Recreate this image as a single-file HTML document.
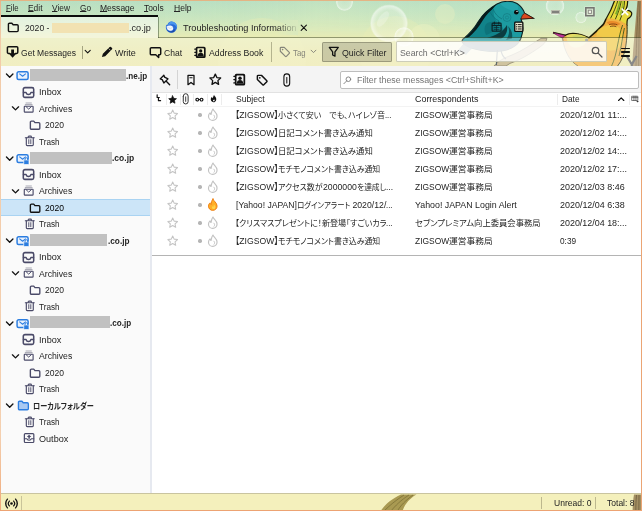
<!DOCTYPE html>
<html lang="ja">
<head>
<meta charset="utf-8">
<title>2020 - Mozilla Thunderbird</title>
<style>
html,body{margin:0;padding:0;}
body{width:642px;height:511px;overflow:hidden;position:relative;background:#fff;
 font-family:"Liberation Sans","Noto Sans CJK JP",sans-serif;font-size:9.6px;color:#242424;}
.abs{position:absolute;}
.t{position:absolute;white-space:pre;line-height:12px;height:12px;font-feature-settings:"palt";}
.r{display:inline-block;transform-origin:0 0;white-space:pre;}
.j{font-size:8.4px;}
svg{position:absolute;overflow:visible;}
#win{position:absolute;left:0;top:0;width:642px;height:511px;overflow:hidden;}
#art{left:0;top:0;}
#menubar{position:absolute;left:0;top:0;width:642px;height:16px;}
#tabs{position:absolute;left:0;top:15px;width:642px;height:23px;}
#toolbar{position:absolute;left:0;top:38px;width:642px;height:28px;}
#folderpane{position:absolute;left:1px;top:66px;width:149px;height:427px;background:#fafafa;}
#splitter{position:absolute;left:150px;top:66px;width:2px;height:427px;background:#e6e9f0;}
#qfbar{position:absolute;left:152px;top:66px;width:489px;height:27px;background:#f4f4f4;border-bottom:1px solid #e2e2e2;box-sizing:border-box;}
#threadpane{position:absolute;left:152px;top:93px;width:489px;height:162px;background:#fff;}
#msgpane{position:absolute;left:152px;top:255px;width:489px;height:238px;background:#fff;border-top:1px solid #b4b4b4;box-sizing:border-box;}
#statusbar{position:absolute;left:0;top:493px;width:642px;height:18px;background:#f4f0bc;border-top:1px solid #c9c4a0;box-sizing:border-box;}
#frame{position:absolute;left:0;top:0;width:642px;height:511px;pointer-events:none;}
#frame i{position:absolute;display:block;}
#frame .l{left:0;top:0;width:1px;height:511px;background:linear-gradient(to bottom,#e9b48a 0,#f2cba9 8%,#f4d0b0 85%,#efa878 100%);}
#frame .r{right:0;top:0;width:1px;height:511px;background:#eba574;}
#frame .tp{left:0;top:0;width:642px;height:1px;background:#e4b484;}
#frame .b{left:0;bottom:0;width:642px;height:1px;background:#eda373;}
.sel{position:absolute;left:0;width:149px;height:17px;background:#cce8ff;}
u{text-decoration-thickness:0.8px;text-underline-offset:0.4px;}
</style>
</head>
<body>
<div id="win">

<svg id="art" class="abs" width="642" height="66" viewBox="0 0 642 66">
<defs>
<linearGradient id="gh" x1="0" x2="0" y1="0" y2="1">
<stop offset="0" stop-color="#b9e0c4"/><stop offset="0.24" stop-color="#c9e6c1"/><stop offset="0.45" stop-color="#dcebbc"/><stop offset="0.575" stop-color="#e8ebb4"/><stop offset="0.8" stop-color="#eae8ab"/><stop offset="1" stop-color="#ebe7a8"/>
</linearGradient>
<linearGradient id="gv" x1="0" x2="1" y1="0" y2="0">
<stop offset="0" stop-color="#a9d6bb" stop-opacity="0.12"/><stop offset="0.3" stop-color="#a9d6bb" stop-opacity="0.06"/><stop offset="0.5" stop-color="#e8efb8" stop-opacity="0.15"/><stop offset="0.7" stop-color="#c4e6cc" stop-opacity="0.1"/><stop offset="1" stop-color="#c4e6cc" stop-opacity="0.2"/>
</linearGradient>
<linearGradient id="gm" x1="0" x2="0" y1="0" y2="1"><stop offset="0" stop-color="#fff"/><stop offset="0.3" stop-color="#fff"/><stop offset="0.55" stop-color="#000"/></linearGradient>
<mask id="topmask"><rect width="642" height="66" fill="url(#gm)"/></mask>
<radialGradient id="bub" cx="0.5" cy="0.5" r="0.5">
<stop offset="0" stop-color="#fff" stop-opacity="0.12"/><stop offset="0.7" stop-color="#fff" stop-opacity="0.2"/><stop offset="0.92" stop-color="#fff" stop-opacity="0.55"/><stop offset="1" stop-color="#fff" stop-opacity="0.1"/>
</radialGradient>
<linearGradient id="fade" x1="0" x2="1"><stop offset="0" stop-color="#d9e8bd" stop-opacity="0"/><stop offset="1" stop-color="#d9e8bd" stop-opacity="1"/></linearGradient>
<clipPath id="bbclip"><path d="M464.5 38 C470 33 474 29 478 22 C483 14 490 8 497 4 C503 0.8 511 0.2 517 3.5 C521 6 523.5 10 524.6 13.2 L533.4 18.2 L521 19 C523 24 524 30 521 38 C519 44 512 49 503 50.6 C492 52.4 476 50.6 468 46.6 C462 43.6 460 40.4 464.5 38Z"/></clipPath>
</defs>
<rect width="642" height="66" fill="url(#gh)"/>
<rect width="642" height="66" fill="url(#gv)" mask="url(#topmask)"/>
<!-- soft bokeh -->
<circle cx="262" cy="62" r="44" fill="#eef0b4" opacity="0.3"/>
<circle cx="395" cy="52" r="36" fill="#eef0b4" opacity="0.25"/>
<circle cx="445" cy="14" r="10" fill="#e6efc0" opacity="0.42"/>
<circle cx="424" cy="40" r="16" fill="#eef2c4" opacity="0.4"/>
<!-- bubbles -->
<circle cx="344.5" cy="2.3" r="8.6" fill="url(#bub)"/>
<circle cx="389" cy="23.4" r="19" fill="url(#bub)"/>
<ellipse cx="383" cy="19" rx="4" ry="9" transform="rotate(35 383 19)" fill="#fff" opacity="0.22"/>
<circle cx="404" cy="37" r="10" fill="url(#bub)"/>
<circle cx="555" cy="6" r="9.5" fill="url(#bub)"/>
<circle cx="581" cy="17.5" r="5.8" fill="url(#bub)"/>
<!-- branch under blue bird -->
<path d="M494 66 C498 61 504 58 512 55 C522 51 532 44 541 38.4 L547 38.4 C546 42 544 44 540 47 C530 54 520 60 510 63.4 L506 66Z" fill="#bba976" stroke="#5f5438" stroke-width="0.8"/>
<!-- blue bird -->
<g id="bluebird">
<path d="M464.5 38 C470 33 474 29 478 22 C483 14 490 8 497 4 C503 0.8 511 0.2 517 3.5 C521 6 523.5 10 524.6 13.2 L533.4 18.2 L521 19 C523 24 524 30 521 38 C519 44 512 49 503 50.6 C492 52.4 476 50.6 468 46.6 C462 43.6 460 40.4 464.5 38Z" fill="#1c9ba0" stroke="#0b2224" stroke-width="1.1"/>
<path d="M465 38 C471 33 475.4 27 479.4 20 C483.4 13.4 489.6 8 496.4 4.2 C491 10.4 486.4 18.6 482.6 26.4 C479.4 32.6 473 37.4 465 38Z" fill="#071a1c"/>
<path d="M459 41.6 L524 41.6 L524 60 L459 60Z" fill="#2f4a58" clip-path="url(#bbclip)"/>
<path d="M468 38 C474 33 479 27 483 20 C486 15 490 11 494 8 C493 14 494 19 498 22 C503 26 506 32 503 38 C495 40 478 40 468 38Z" fill="#11838a"/>
<path d="M486 24 C490 21 495 21 499 24 C497 29 492 33 486 35 C484 31 484 27 486 24Z" fill="#0d6f77" opacity="0.8"/>
<path d="M500 3.4 C506 1.4 513 2 517.4 5 C519 8 518 11 515 12 C510 10 504 8 500 3.4Z" fill="#27aab0" opacity="0.7"/>
<path d="M490 12 C492 16 495 19 499 21 M493 9 C495 14 498 17 502 19" stroke="#0d6f77" stroke-width="0.7" fill="none"/>
<path d="M487 37.6 C495 36 503 32 507 25 C508 31 506 36 501 38.5Z" fill="#0b3c40"/>
<path d="M508 26 C510 31 509 36 506 40 L512 38.5 C513 33 511 29 508 26Z" fill="#0e565c"/>
<circle cx="507" cy="17.5" r="4" fill="none" stroke="#157f86" stroke-width="0.8"/>
<circle cx="507" cy="17.5" r="1.6" fill="none" stroke="#157f86" stroke-width="0.7"/>
<path d="M524.6 13.2 L533.4 18.2 L521 19 C521.5 16.5 522.5 14.5 524.6 13.2Z" fill="#d9481f" stroke="#3a1206" stroke-width="0.7"/>
<circle cx="516.3" cy="12.2" r="2.3" fill="#0a0a0a"/>
<circle cx="517" cy="11.4" r="0.7" fill="#fff"/>
<path d="M497.4 50 C497 55 496.6 60 496.4 65 M501 50.4 C501.6 54 503 57 506 59" stroke="#1a2a2c" stroke-width="1.2" fill="none"/>
<path d="M466 41 C462 45 459 49 456.4 53 L463 52 L466 55 C469 51 472 48 476 46Z" fill="#3a5866" opacity="0.8"/>
</g>
<!-- yellow bird -->
<g id="yellowbird">
<!-- tail feathers -->
<path d="M614.8 0 L627.8 0 C627.8 4 627 7.6 625.6 10.8 C627.8 9.8 630.6 10.6 631.6 12.8 C632.2 15.2 630 17.4 627.6 19 C626.8 21 627 23 627 25 L606 19 C609.6 13 612.6 6.4 614.8 0Z" fill="#e6d83c" stroke="#1d1a06" stroke-width="1.2"/>
<path d="M618 0 C616.4 6 613.6 12.4 610.4 18.6 M621.4 0 C620.4 7 618 13.4 615 20 M624.6 0.6 C624.4 7 622.6 14 619.6 21" stroke="#2c3a0c" stroke-width="0.9" fill="none"/>
<path d="M619.2 0 C618.4 5 616.8 10 615 14 L617 14.8 C618.8 10 620 5 620.6 0Z" fill="#7fae2c"/>
<path d="M622.6 0 C622.2 5 621 10 619.4 15 L621 15.4 C622.8 10.6 623.6 5 623.8 0Z" fill="#9cba2e"/>
<!-- body -->
<path d="M553 32.6 L565 35.4 C568.6 33.4 574 33 579 34.2 C583 35 586.4 37 588.8 38 C594 33.6 599.4 28.6 603.4 24.4 C604.8 21.6 605.6 20.2 606 19 C612 17.6 621 20 627 25 C627.4 31 627 38 625.8 46 C624.8 54 621.6 61 617.6 66 L578 66 C571 62 566 54 563.6 44 C563.2 42 562.8 40 562.6 38.2Z" fill="#f1b244"/>
<path d="M553 32.6 L565 35.4 C568.6 33.4 574 33 579 34.2 C583 35 586.4 37 588.8 38 C594 33.6 599.4 28.6 603.4 24.4 C604.8 21.6 605.6 20.2 606 19" fill="none" stroke="#1d1a06" stroke-width="1.6"/>
<path d="M627 25 C627.4 31 627 38 625.8 46 C624.8 54 621.6 61 617.6 66" fill="none" stroke="#2a2a10" stroke-width="1"/>
<path d="M562.6 38.2 C562.8 40 563.2 42 563.6 44 C566 54 571 62 578 66" fill="none" stroke="#5a5030" stroke-width="0.8"/>
<path d="M566.4 35.4 C570.4 33.8 576 33.6 580.6 34.8 C584 35.6 586.6 37 588.6 38.2 C586.6 44 581 48 574.6 47.4 C569.6 46.6 566.4 41.6 566.4 35.4Z" fill="#e6dc62"/>
<path d="M572 36 C576 34.6 581 35.4 584 37.4 C581 39.6 575.6 39.4 572 36Z" fill="#c9d66a" opacity="0.8"/>
<path d="M598 30 C603 25.6 611 24 617 26.4 C622 28.6 624 35 622.6 43 C620 51 609 53 602 48 C596 44 595 35 598 30Z" fill="#f0d84c" opacity="0.62"/>
<path d="M592 38 C596 35 600 35 603 38 C602 43 597 46 592.6 44 C591 42 591 40 592 38Z" fill="#f6c04a" opacity="0.85"/>
<path d="M606.6 22.4 C611 20 617 21 620.6 24 C616.6 26.4 610.6 26.8 606.6 22.4Z" fill="#e78426" opacity="0.85"/>
<path d="M609 24.6 C612 23.6 615 23.8 617.4 24.8 M610 26.6 C612.4 26 614.6 26 616.4 26.8" stroke="#5a2c08" stroke-width="0.7" fill="none"/>
<path d="M622.6 25 C620.4 31 619 38 617.4 46 C616.4 52 614.4 60 611.6 66 M624.4 28 C622.6 36 621.6 46 619 56" stroke="#3d5a16" stroke-width="0.9" fill="none"/>
<path d="M553 32.6 L565 35.4 L562.6 38.2 C559 36.6 555.6 34.6 553 32.6Z" fill="#c2329a" stroke="#4a0c38" stroke-width="0.5"/>
<circle cx="586.6" cy="40" r="1.6" fill="#8c8f86"/>
</g>
<!-- trunk at right -->
<path d="M637.6 0 C636.4 12 635.4 24 634.2 38 C633.2 48 632.6 58 632.4 66 L642 66 L642 0Z" fill="#a48d62"/>
<path d="M638.4 0 C637.4 20 636.4 42 636 66 M640 0 C639.2 24 638.8 46 638.6 66" stroke="#7a6440" stroke-width="0.9" fill="none"/>
<path d="M626.8 56 L631.8 64.6 L636.6 56 M631.8 64.6 L631.8 66" stroke="#555" stroke-width="2.2" fill="none"/>
</svg>

<div id="menubar">
<div class="abs" style="left:551.20px;top:10.00px;width:9.00px;height:3.70px;background:#80807c;border:0.7px solid #b9bcae;box-sizing:border-box;"></div>
<svg style="left:585.20px;top:7.20px" width="9.80" height="9.60" viewBox="0 0 9.8 9.6" ><rect x="0.8" y="0.8" width="8.2" height="8" fill="#d9e6d0" stroke="#767672" stroke-width="1.6"/><rect x="3.3" y="3.2" width="3.2" height="3.2" fill="#f2f5e8" stroke="#8a8a84" stroke-width="0.9"/><rect x="-0.3" y="-0.3" width="10.4" height="10.2" fill="none" stroke="#fff" stroke-opacity="0.35" stroke-width="0.6"/></svg>
<svg style="left:620.70px;top:8.00px" width="7.80" height="7.60" viewBox="0 0 16 16" ><path d="M2 2 L14 14 M14 2 L2 14" fill="none" stroke="#fff" stroke-width="3.4" stroke-linecap="round" stroke-linejoin="round" /></svg>
<span class="t" style="left:5.50px;top:1.70px;"><span class="r" style="transform:scaleX(0.8073);margin-right:-2.98px"><u>F</u>ile</span></span>
<span class="t" style="left:28.00px;top:1.70px;"><span class="r" style="transform:scaleX(0.8763);margin-right:-2.05px"><u>E</u>dit</span></span>
<span class="t" style="left:52.00px;top:1.70px;"><span class="r" style="transform:scaleX(0.8721);margin-right:-2.64px"><u>V</u>iew</span></span>
<span class="t" style="left:80.00px;top:1.70px;"><span class="r" style="transform:scaleX(0.8585);margin-right:-1.81px"><u>G</u>o</span></span>
<span class="t" style="left:100.00px;top:1.70px;"><span class="r" style="transform:scaleX(0.8886);margin-right:-4.34px"><u>M</u>essage</span></span>
<span class="t" style="left:144.40px;top:1.70px;"><span class="r" style="transform:scaleX(0.8748);margin-right:-2.81px"><u>T</u>ools</span></span>
<span class="t" style="left:174.00px;top:1.70px;"><span class="r" style="transform:scaleX(0.8911);margin-right:-2.15px"><u>H</u>elp</span></span>
</div>
<div id="tabs">
<div class="abs" style="left:1.00px;top:2.00px;width:157.00px;height:21.00px;background:rgba(255,255,255,0.5);"></div>
<div class="abs" style="left:1.00px;top:0.00px;width:157.40px;height:2.00px;background:#0c0c0c;"></div>
<div class="abs" style="left:157.60px;top:2.00px;width:0.80px;height:20.60px;background:rgba(70,90,60,0.55);"></div>
<div class="abs" style="left:158.00px;top:22.00px;width:483.00px;height:0.90px;background:rgba(60,70,40,0.5);"></div>
<div class="abs" style="left:51.70px;top:8.00px;width:77.60px;height:9.80px;background:#f2e2b2;"></div>
<svg style="left:6.80px;top:6.20px" width="12.60" height="12.60" viewBox="0 0 16 16" ><path d="M1.8 4.2 a1.4 1.4 0 0 1 1.4 -1.4 h3 l1.6 1.9 h5 a1.4 1.4 0 0 1 1.4 1.4 v6 a1.4 1.4 0 0 1 -1.4 1.4 h-9.6 a1.4 1.4 0 0 1 -1.4 -1.4z" fill="none" stroke="#111" stroke-width="1.8" stroke-linecap="round" stroke-linejoin="round" /></svg>
<svg style="left:164.80px;top:6.20px" width="12.00" height="12.00" viewBox="0 0 16 16" ><path d="M8.6 0.6 a7.5 7.5 0 1 1 -5.6 12.6 c-1.2 -1.4 -1.9 -3.2 -1.9 -5 c0 -1.2 0.3 -2.4 0.8 -3.4 l0.7 1.2 c1.2 -3.2 3.4 -5.4 6 -5.4z" fill="#2a6cd8"/><path d="M8.6 0.6 a7.5 7.5 0 0 1 7.4 8.8 c-1 -3.2 -3.6 -5 -6.8 -5 c-2.2 0 -4.2 0.8 -5.6 2.4 c1 -3.4 2.8 -6.2 5 -6.2z" fill="#4b96ee"/><path d="M2 7.2 c1.8 -1.2 4.4 -1.6 6.6 -0.8 c1.6 0.6 2.4 1.8 2.4 3.2 c0 1.8 -1.2 3 -3 3.4 c-1.8 0.4 -3.4 -0.2 -4.4 -1.4 c-0.9 -1.2 -1.4 -2.8 -1.6 -4.4z" fill="#f3f6fb"/><path d="M3 8 L7 10.2 L10.6 8.2" stroke="#c3d3ea" stroke-width="0.8" fill="none"/><path d="M3.4 12 c1.2 1.4 3.2 2.2 5.4 1.8 c1.8 -0.4 3 -1.8 3.2 -3.6 c1.4 1.2 1.2 3.2 0 4.4 a7.5 7.5 0 0 1 -9 -2.2z" fill="#1a49a6"/></svg>
<svg style="left:299.80px;top:8.80px" width="7.60" height="7.60" viewBox="0 0 16 16" ><path d="M2.5 2.5 L13.5 13.5 M13.5 2.5 L2.5 13.5" fill="none" stroke="#111" stroke-width="2.4" stroke-linecap="round" stroke-linejoin="round" /></svg>
<svg style="left:491.20px;top:5.60px" width="11.20" height="11.20" viewBox="0 0 16 16" ><path d="M2.6 3 h10.8 a1 1 0 0 1 1 1 v9.6 a1 1 0 0 1 -1 1 h-10.8 a1 1 0 0 1 -1 -1 v-9.6 a1 1 0 0 1 1 -1z" fill="none" stroke="#0c2326" stroke-width="1.7" stroke-linecap="round" stroke-linejoin="round" /><path d="M1.8 6.4 h12.4 M4.8 1.4 v3 M11.2 1.4 v3" fill="none" stroke="#0c2326" stroke-width="1.6" stroke-linecap="round" stroke-linejoin="round" /><path d="M4.4 9.4 h7.2 M4.4 12 h7.2 M8 7 v7" fill="none" stroke="#0c2326" stroke-width="1.0" stroke-linecap="round" stroke-linejoin="round" /></svg>
<svg style="left:513.20px;top:5.60px" width="11.60" height="11.60" viewBox="0 0 16 16" ><path d="M3.4 1.6 h9.2 a1 1 0 0 1 1 1 v10.8 a1 1 0 0 1 -1 1 h-9.2 a1 1 0 0 1 -1 -1 v-10.8 a1 1 0 0 1 1 -1z" fill="#e9e8cf" stroke="#0a0a0a" stroke-width="1.8" stroke-linecap="round" stroke-linejoin="round" /><path d="M7.4 5 h4 M7.4 8 h4 M7.4 11 h4" fill="none" stroke="#0a0a0a" stroke-width="1.3" stroke-linecap="round" stroke-linejoin="round" /><path d="M4.6 5 h0.8 M4.6 8 h0.8 M4.6 11 h0.8" fill="none" stroke="#0a0a0a" stroke-width="1.3" stroke-linecap="round" stroke-linejoin="round" /></svg>
<span class="t" style="left:24.70px;top:6.80px;"><span class="r" style="transform:scaleX(0.9006);margin-right:-2.70px">2020 -</span></span>
<span class="t" style="left:128.90px;top:6.80px;"><span class="r" style="transform:scaleX(0.9504);margin-right:-1.14px">.co.jp</span></span>
<span class="t" style="left:182.80px;top:6.80px;"><span class="r" style="transform:scaleX(0.9546);margin-right:-5.41px">Troubleshooting Information</span></span>
<div class="abs" style="left:276.00px;top:5.00px;width:22.00px;height:15.00px;background:linear-gradient(90deg,rgba(217,233,190,0),rgba(217,233,190,0.92));"></div>
</div>
<div id="toolbar">
<div class="abs" style="left:1.00px;top:0.00px;width:640.00px;height:28.00px;background:rgba(255,255,255,0.30);"></div>
<div class="abs" style="left:621.40px;top:9.70px;width:8.40px;height:1.70px;background:#111;border-radius:0.8px;"></div>
<div class="abs" style="left:621.40px;top:13.30px;width:8.40px;height:1.70px;background:#111;border-radius:0.8px;"></div>
<div class="abs" style="left:621.40px;top:16.90px;width:8.40px;height:1.70px;background:#111;border-radius:0.8px;"></div>
<div class="abs" style="left:82.00px;top:7.60px;width:0.80px;height:13.00px;background:rgba(90,90,60,0.5);"></div>
<div class="abs" style="left:271.00px;top:4.40px;width:0.80px;height:20.00px;background:rgba(90,90,60,0.4);"></div>
<div class="abs" style="left:322.00px;top:4.00px;width:70.00px;height:20.40px;background:rgba(100,100,80,0.27);border:1px solid rgba(90,90,70,0.42);box-sizing:border-box;border-radius:1.5px;"></div>
<div class="abs" style="left:396.00px;top:3.40px;width:211.00px;height:21.00px;background:rgba(255,255,255,0.82);border:0.8px solid rgba(200,200,180,0.9);box-sizing:border-box;border-radius:1.5px;"></div>
<svg style="left:6.40px;top:7.40px" width="13.20" height="13.20" viewBox="0 0 16 16" ><path d="M4.6 10.2 H3 a1.3 1.3 0 0 1 -1.3 -1.3 V3.4 a1.3 1.3 0 0 1 1.3 -1.3 h10 a1.3 1.3 0 0 1 1.3 1.3 v5.5 a1.3 1.3 0 0 1 -1.3 1.3 H11.4" fill="none" stroke="#111" stroke-width="1.8" stroke-linecap="round" stroke-linejoin="round" /><path d="M6.3 5.4 h3.4 v4.6 h3.2 L8 15.4 L3.1 10 H6.3z" fill="#111"/></svg>
<svg style="left:84.40px;top:10.00px" width="7.40" height="7.40" viewBox="0 0 16 16" ><path d="M2.5 5 L8 10.5 L13.5 5" fill="none" stroke="#111" stroke-width="2.4" stroke-linecap="round" stroke-linejoin="round" /></svg>
<svg style="left:100.60px;top:8.00px" width="12.00" height="12.00" viewBox="0 0 16 16" ><path d="M11.6 1.3 a1.2 1.2 0 0 1 1.7 0 l1.4 1.4 a1.2 1.2 0 0 1 0 1.7 L5.6 13.5 L1.2 14.8 L2.5 10.4z" fill="#111"/><path d="M10.2 3.4 L12.6 5.8" stroke="#eef0c8" stroke-width="0.9"/></svg>
<svg style="left:148.60px;top:8.20px" width="13.00" height="13.00" viewBox="0 0 16 16" ><path d="M2.9 2.2 h10.2 a1.3 1.3 0 0 1 1.3 1.3 v6 a1.3 1.3 0 0 1 -1.3 1.3 h-1.2 v3.4 l-3.6 -3.4 h-5.4 a1.3 1.3 0 0 1 -1.3 -1.3 v-6 a1.3 1.3 0 0 1 1.3 -1.3z" fill="none" stroke="#111" stroke-width="1.8" stroke-linecap="round" stroke-linejoin="round" /></svg>
<svg style="left:194.00px;top:7.60px" width="12.60" height="12.60" viewBox="0 0 16 16" ><path d="M4.2 0.8 h8.6 a2 2 0 0 1 2 2 v10.4 a2 2 0 0 1 -2 2 h-8.6 a2 2 0 0 1 -2 -2 v-10.4 a2 2 0 0 1 2 -2z" fill="#111"/><rect x="4.3" y="2.9" width="8.4" height="10.2" rx="0.6" fill="#f0efc6"/><circle cx="8.5" cy="6.3" r="2.1" fill="#111"/><path d="M4.6 13 c0 -3.2 1.7 -4.4 3.9 -4.4 s3.9 1.2 3.9 4.4z" fill="#111"/><path d="M1 4 h2 M1 8 h2 M1 12 h2" stroke="#111" stroke-width="1.5" stroke-linecap="round"/></svg>
<svg style="left:278.60px;top:8.40px" width="11.60" height="11.60" viewBox="0 0 16 16" ><path d="M1.8 2.8 a1 1 0 0 1 1 -1 h4.4 l7 7 a1 1 0 0 1 0 1.4 l-4 4 a1 1 0 0 1 -1.4 0 l-7 -7z" fill="none" stroke="#85857a" stroke-width="1.6" stroke-linecap="round" stroke-linejoin="round" /><circle cx="5" cy="5" r="1.1" fill="#85857a"/></svg>
<svg style="left:309.60px;top:10.40px" width="7.00" height="7.00" viewBox="0 0 16 16" ><path d="M2.5 5 L8 10.5 L13.5 5" fill="none" stroke="#85857a" stroke-width="2.2" stroke-linecap="round" stroke-linejoin="round" /></svg>
<svg style="left:328.00px;top:8.40px" width="11.60" height="11.60" viewBox="0 0 16 16" ><path d="M1.8 2 h12.4 l-4.6 6 v6 l-3.2 -1.6 v-4.4z" fill="none" stroke="#111" stroke-width="1.8" stroke-linecap="round" stroke-linejoin="round" /></svg>
<svg style="left:591.40px;top:8.40px" width="12.00" height="12.00" viewBox="0 0 16 16" ><path d="M10.3 6 a4.3 4.3 0 1 1 -8.6 0 a4.3 4.3 0 1 1 8.6 0z M9.2 9.2 L14.6 14.6" fill="none" stroke="#555" stroke-width="1.7" stroke-linecap="round" stroke-linejoin="round" /></svg>
<span class="t" style="left:21.30px;top:8.80px;"><span class="r" style="transform:scaleX(0.8891);margin-right:-6.86px">Get Messages</span></span>
<span class="t" style="left:115.00px;top:8.80px;"><span class="r" style="transform:scaleX(0.9361);margin-right:-1.42px">Write</span></span>
<span class="t" style="left:164.00px;top:8.80px;"><span class="r" style="transform:scaleX(0.8882);margin-right:-2.27px">Chat</span></span>
<span class="t" style="left:209.00px;top:8.80px;"><span class="r" style="transform:scaleX(0.9090);margin-right:-5.43px">Address Book</span></span>
<span class="t" style="left:292.90px;top:8.80px;color:#85857a;"><span class="r" style="transform:scaleX(0.8081);margin-right:-2.97px">Tag</span></span>
<span class="t" style="left:341.90px;top:8.80px;"><span class="r" style="transform:scaleX(0.9172);margin-right:-4.02px">Quick Filter</span></span>
<span class="t" style="left:399.60px;top:8.80px;color:#6b6b6b;"><span class="r" style="transform:scaleX(0.9115);margin-right:-6.30px">Search &lt;Ctrl+K&gt;</span></span>
</div>
<div id="folderpane">
<div class="abs" style="left:0.00px;top:133.40px;width:149.00px;height:16.40px;background:#cce5f8;border-top:0.8px solid #a9d3f2;border-bottom:0.8px solid #a9d3f2;box-sizing:border-box;"></div>
<div class="abs" style="left:29.20px;top:3.30px;width:95.60px;height:12.00px;background:#c1c1c1;"></div>
<div class="abs" style="left:29.20px;top:85.50px;width:81.40px;height:12.00px;background:#c1c1c1;"></div>
<div class="abs" style="left:29.20px;top:168.20px;width:77.20px;height:12.00px;background:#c1c1c1;"></div>
<div class="abs" style="left:29.20px;top:250.40px;width:79.60px;height:12.00px;background:#c1c1c1;"></div>
<svg style="left:4.00px;top:5.00px" width="9.40" height="9.40" viewBox="0 0 16 16" ><path d="M2.5 5 L8 10.5 L13.5 5" fill="none" stroke="#111" stroke-width="2.3" stroke-linecap="round" stroke-linejoin="round" /></svg>
<svg style="left:15.40px;top:3.20px" width="13.20" height="13.20" viewBox="0 0 16 16" ><path d="M3.2 3.4 h9.6 a1.9 1.9 0 0 1 1.9 1.9 v5.6 a1.9 1.9 0 0 1 -1.9 1.9 h-9.6 a1.9 1.9 0 0 1 -1.9 -1.9 v-5.6 a1.9 1.9 0 0 1 1.9 -1.9z" fill="#eaf2fd" stroke="#2b7de0" stroke-width="1.8" stroke-linecap="round" stroke-linejoin="round" /><path d="M4.4 6 L8 8.8 L11.6 6" fill="none" stroke="#2b7de0" stroke-width="1.3" stroke-linecap="round" stroke-linejoin="round" /></svg>
<svg style="left:21.40px;top:19.50px" width="13.00" height="13.00" viewBox="0 0 16 16" ><path d="M3.6 2 h8.8 a2 2 0 0 1 2 2 v8 a2 2 0 0 1 -2 2 h-8.8 a2 2 0 0 1 -2 -2 v-8 a2 2 0 0 1 2 -2z" fill="none" stroke="#4a4a68" stroke-width="1.9" stroke-linecap="round" stroke-linejoin="round" /><path d="M1.8 8 h3.2 c0.4 1.7 1.5 2.5 3 2.5 s2.6 -0.8 3 -2.5 h3.2" fill="none" stroke="#4a4a68" stroke-width="1.7" stroke-linecap="round" stroke-linejoin="round" /></svg>
<svg style="left:10.00px;top:38.20px" width="9.00" height="9.00" viewBox="0 0 16 16" ><path d="M2.5 5 L8 10.5 L13.5 5" fill="none" stroke="#111" stroke-width="2.3" stroke-linecap="round" stroke-linejoin="round" /></svg>
<svg style="left:22.40px;top:36.40px" width="11.40" height="11.40" viewBox="0 0 16 16" ><path d="M4.2 1.4 h7.6 M3.2 3.6 h9.6" stroke="#a8a8b4" stroke-width="1.4" stroke-linecap="round"/><path d="M2.6 6 h10.8 a0.8 0.8 0 0 1 0.8 0.8 v6.4 a1 1 0 0 1 -1 1 h-10.4 a1 1 0 0 1 -1 -1 v-6.4 a0.8 0.8 0 0 1 0.8 -0.8z" fill="none" stroke="#4a4a68" stroke-width="1.6" stroke-linecap="round" stroke-linejoin="round" /><path d="M4.2 6.4 L8 10 L11.8 6.4" fill="none" stroke="#4a4a68" stroke-width="1.4" stroke-linecap="round" stroke-linejoin="round" /></svg>
<svg style="left:27.60px;top:53.10px" width="12.20" height="12.20" viewBox="0 0 16 16" ><path d="M1.8 4.2 a1.4 1.4 0 0 1 1.4 -1.4 h3 l1.6 1.9 h5 a1.4 1.4 0 0 1 1.4 1.4 v6 a1.4 1.4 0 0 1 -1.4 1.4 h-9.6 a1.4 1.4 0 0 1 -1.4 -1.4z" fill="none" stroke="#4a4a68" stroke-width="1.8" stroke-linecap="round" stroke-linejoin="round" /></svg>
<svg style="left:22.60px;top:69.20px" width="11.60" height="11.60" viewBox="0 0 16 16" ><path d="M1.8 3.8 h12.4 M5.8 3.6 v-1.2 a0.9 0.9 0 0 1 0.9 -0.9 h2.6 a0.9 0.9 0 0 1 0.9 0.9 v1.2" fill="none" stroke="#4a4a68" stroke-width="1.5" stroke-linecap="round" stroke-linejoin="round" /><path d="M3.2 4 v9.4 a1.2 1.2 0 0 0 1.2 1.2 h7.2 a1.2 1.2 0 0 0 1.2 -1.2 v-9.4" fill="none" stroke="#4a4a68" stroke-width="1.6" stroke-linecap="round" stroke-linejoin="round" /><path d="M6.6 6.4 v5.6 M9.4 6.4 v5.6" fill="none" stroke="#4a4a68" stroke-width="1.3" stroke-linecap="round" stroke-linejoin="round" /></svg>
<svg style="left:4.00px;top:87.50px" width="9.40" height="9.40" viewBox="0 0 16 16" ><path d="M2.5 5 L8 10.5 L13.5 5" fill="none" stroke="#111" stroke-width="2.3" stroke-linecap="round" stroke-linejoin="round" /></svg>
<svg style="left:15.40px;top:85.70px" width="13.20" height="13.20" viewBox="0 0 16 16" ><path d="M3.2 3.4 h9.6 a1.9 1.9 0 0 1 1.9 1.9 v5.6 a1.9 1.9 0 0 1 -1.9 1.9 h-9.6 a1.9 1.9 0 0 1 -1.9 -1.9 v-5.6 a1.9 1.9 0 0 1 1.9 -1.9z" fill="#eaf2fd" stroke="#2b7de0" stroke-width="1.8" stroke-linecap="round" stroke-linejoin="round" /><path d="M4.4 6 L8 8.8 L11.6 6" fill="none" stroke="#2b7de0" stroke-width="1.3" stroke-linecap="round" stroke-linejoin="round" /><rect x="9.4" y="9.6" width="6.4" height="5.6" rx="0.8" fill="#2b7de0" stroke="#fafafa" stroke-width="0.9"/><path d="M11 9.8 v-1.2 a1.6 1.6 0 0 1 3.2 0 v1.2" fill="none" stroke="#2b7de0" stroke-width="1.2"/></svg>
<svg style="left:21.40px;top:102.00px" width="13.00" height="13.00" viewBox="0 0 16 16" ><path d="M3.6 2 h8.8 a2 2 0 0 1 2 2 v8 a2 2 0 0 1 -2 2 h-8.8 a2 2 0 0 1 -2 -2 v-8 a2 2 0 0 1 2 -2z" fill="none" stroke="#4a4a68" stroke-width="1.9" stroke-linecap="round" stroke-linejoin="round" /><path d="M1.8 8 h3.2 c0.4 1.7 1.5 2.5 3 2.5 s2.6 -0.8 3 -2.5 h3.2" fill="none" stroke="#4a4a68" stroke-width="1.7" stroke-linecap="round" stroke-linejoin="round" /></svg>
<svg style="left:10.00px;top:120.70px" width="9.00" height="9.00" viewBox="0 0 16 16" ><path d="M2.5 5 L8 10.5 L13.5 5" fill="none" stroke="#111" stroke-width="2.3" stroke-linecap="round" stroke-linejoin="round" /></svg>
<svg style="left:22.40px;top:118.90px" width="11.40" height="11.40" viewBox="0 0 16 16" ><path d="M4.2 1.4 h7.6 M3.2 3.6 h9.6" stroke="#a8a8b4" stroke-width="1.4" stroke-linecap="round"/><path d="M2.6 6 h10.8 a0.8 0.8 0 0 1 0.8 0.8 v6.4 a1 1 0 0 1 -1 1 h-10.4 a1 1 0 0 1 -1 -1 v-6.4 a0.8 0.8 0 0 1 0.8 -0.8z" fill="none" stroke="#4a4a68" stroke-width="1.6" stroke-linecap="round" stroke-linejoin="round" /><path d="M4.2 6.4 L8 10 L11.8 6.4" fill="none" stroke="#4a4a68" stroke-width="1.4" stroke-linecap="round" stroke-linejoin="round" /></svg>
<svg style="left:27.60px;top:135.60px" width="12.20" height="12.20" viewBox="0 0 16 16" ><path d="M1.8 4.2 a1.4 1.4 0 0 1 1.4 -1.4 h3 l1.6 1.9 h5 a1.4 1.4 0 0 1 1.4 1.4 v6 a1.4 1.4 0 0 1 -1.4 1.4 h-9.6 a1.4 1.4 0 0 1 -1.4 -1.4z" fill="none" stroke="#111" stroke-width="1.8" stroke-linecap="round" stroke-linejoin="round" /></svg>
<svg style="left:22.60px;top:151.70px" width="11.60" height="11.60" viewBox="0 0 16 16" ><path d="M1.8 3.8 h12.4 M5.8 3.6 v-1.2 a0.9 0.9 0 0 1 0.9 -0.9 h2.6 a0.9 0.9 0 0 1 0.9 0.9 v1.2" fill="none" stroke="#4a4a68" stroke-width="1.5" stroke-linecap="round" stroke-linejoin="round" /><path d="M3.2 4 v9.4 a1.2 1.2 0 0 0 1.2 1.2 h7.2 a1.2 1.2 0 0 0 1.2 -1.2 v-9.4" fill="none" stroke="#4a4a68" stroke-width="1.6" stroke-linecap="round" stroke-linejoin="round" /><path d="M6.6 6.4 v5.6 M9.4 6.4 v5.6" fill="none" stroke="#4a4a68" stroke-width="1.3" stroke-linecap="round" stroke-linejoin="round" /></svg>
<svg style="left:4.00px;top:170.00px" width="9.40" height="9.40" viewBox="0 0 16 16" ><path d="M2.5 5 L8 10.5 L13.5 5" fill="none" stroke="#111" stroke-width="2.3" stroke-linecap="round" stroke-linejoin="round" /></svg>
<svg style="left:15.40px;top:168.20px" width="13.20" height="13.20" viewBox="0 0 16 16" ><path d="M3.2 3.4 h9.6 a1.9 1.9 0 0 1 1.9 1.9 v5.6 a1.9 1.9 0 0 1 -1.9 1.9 h-9.6 a1.9 1.9 0 0 1 -1.9 -1.9 v-5.6 a1.9 1.9 0 0 1 1.9 -1.9z" fill="#eaf2fd" stroke="#2b7de0" stroke-width="1.8" stroke-linecap="round" stroke-linejoin="round" /><path d="M4.4 6 L8 8.8 L11.6 6" fill="none" stroke="#2b7de0" stroke-width="1.3" stroke-linecap="round" stroke-linejoin="round" /><rect x="9.4" y="9.6" width="6.4" height="5.6" rx="0.8" fill="#2b7de0" stroke="#fafafa" stroke-width="0.9"/><path d="M11 9.8 v-1.2 a1.6 1.6 0 0 1 3.2 0 v1.2" fill="none" stroke="#2b7de0" stroke-width="1.2"/></svg>
<svg style="left:21.40px;top:184.50px" width="13.00" height="13.00" viewBox="0 0 16 16" ><path d="M3.6 2 h8.8 a2 2 0 0 1 2 2 v8 a2 2 0 0 1 -2 2 h-8.8 a2 2 0 0 1 -2 -2 v-8 a2 2 0 0 1 2 -2z" fill="none" stroke="#4a4a68" stroke-width="1.9" stroke-linecap="round" stroke-linejoin="round" /><path d="M1.8 8 h3.2 c0.4 1.7 1.5 2.5 3 2.5 s2.6 -0.8 3 -2.5 h3.2" fill="none" stroke="#4a4a68" stroke-width="1.7" stroke-linecap="round" stroke-linejoin="round" /></svg>
<svg style="left:10.00px;top:203.20px" width="9.00" height="9.00" viewBox="0 0 16 16" ><path d="M2.5 5 L8 10.5 L13.5 5" fill="none" stroke="#111" stroke-width="2.3" stroke-linecap="round" stroke-linejoin="round" /></svg>
<svg style="left:22.40px;top:201.40px" width="11.40" height="11.40" viewBox="0 0 16 16" ><path d="M4.2 1.4 h7.6 M3.2 3.6 h9.6" stroke="#a8a8b4" stroke-width="1.4" stroke-linecap="round"/><path d="M2.6 6 h10.8 a0.8 0.8 0 0 1 0.8 0.8 v6.4 a1 1 0 0 1 -1 1 h-10.4 a1 1 0 0 1 -1 -1 v-6.4 a0.8 0.8 0 0 1 0.8 -0.8z" fill="none" stroke="#4a4a68" stroke-width="1.6" stroke-linecap="round" stroke-linejoin="round" /><path d="M4.2 6.4 L8 10 L11.8 6.4" fill="none" stroke="#4a4a68" stroke-width="1.4" stroke-linecap="round" stroke-linejoin="round" /></svg>
<svg style="left:27.60px;top:218.10px" width="12.20" height="12.20" viewBox="0 0 16 16" ><path d="M1.8 4.2 a1.4 1.4 0 0 1 1.4 -1.4 h3 l1.6 1.9 h5 a1.4 1.4 0 0 1 1.4 1.4 v6 a1.4 1.4 0 0 1 -1.4 1.4 h-9.6 a1.4 1.4 0 0 1 -1.4 -1.4z" fill="none" stroke="#4a4a68" stroke-width="1.8" stroke-linecap="round" stroke-linejoin="round" /></svg>
<svg style="left:22.60px;top:234.20px" width="11.60" height="11.60" viewBox="0 0 16 16" ><path d="M1.8 3.8 h12.4 M5.8 3.6 v-1.2 a0.9 0.9 0 0 1 0.9 -0.9 h2.6 a0.9 0.9 0 0 1 0.9 0.9 v1.2" fill="none" stroke="#4a4a68" stroke-width="1.5" stroke-linecap="round" stroke-linejoin="round" /><path d="M3.2 4 v9.4 a1.2 1.2 0 0 0 1.2 1.2 h7.2 a1.2 1.2 0 0 0 1.2 -1.2 v-9.4" fill="none" stroke="#4a4a68" stroke-width="1.6" stroke-linecap="round" stroke-linejoin="round" /><path d="M6.6 6.4 v5.6 M9.4 6.4 v5.6" fill="none" stroke="#4a4a68" stroke-width="1.3" stroke-linecap="round" stroke-linejoin="round" /></svg>
<svg style="left:4.00px;top:252.50px" width="9.40" height="9.40" viewBox="0 0 16 16" ><path d="M2.5 5 L8 10.5 L13.5 5" fill="none" stroke="#111" stroke-width="2.3" stroke-linecap="round" stroke-linejoin="round" /></svg>
<svg style="left:15.40px;top:250.70px" width="13.20" height="13.20" viewBox="0 0 16 16" ><path d="M3.2 3.4 h9.6 a1.9 1.9 0 0 1 1.9 1.9 v5.6 a1.9 1.9 0 0 1 -1.9 1.9 h-9.6 a1.9 1.9 0 0 1 -1.9 -1.9 v-5.6 a1.9 1.9 0 0 1 1.9 -1.9z" fill="#eaf2fd" stroke="#2b7de0" stroke-width="1.8" stroke-linecap="round" stroke-linejoin="round" /><path d="M4.4 6 L8 8.8 L11.6 6" fill="none" stroke="#2b7de0" stroke-width="1.3" stroke-linecap="round" stroke-linejoin="round" /><rect x="9.4" y="9.6" width="6.4" height="5.6" rx="0.8" fill="#2b7de0" stroke="#fafafa" stroke-width="0.9"/><path d="M11 9.8 v-1.2 a1.6 1.6 0 0 1 3.2 0 v1.2" fill="none" stroke="#2b7de0" stroke-width="1.2"/></svg>
<svg style="left:21.40px;top:267.00px" width="13.00" height="13.00" viewBox="0 0 16 16" ><path d="M3.6 2 h8.8 a2 2 0 0 1 2 2 v8 a2 2 0 0 1 -2 2 h-8.8 a2 2 0 0 1 -2 -2 v-8 a2 2 0 0 1 2 -2z" fill="none" stroke="#4a4a68" stroke-width="1.9" stroke-linecap="round" stroke-linejoin="round" /><path d="M1.8 8 h3.2 c0.4 1.7 1.5 2.5 3 2.5 s2.6 -0.8 3 -2.5 h3.2" fill="none" stroke="#4a4a68" stroke-width="1.7" stroke-linecap="round" stroke-linejoin="round" /></svg>
<svg style="left:10.00px;top:285.70px" width="9.00" height="9.00" viewBox="0 0 16 16" ><path d="M2.5 5 L8 10.5 L13.5 5" fill="none" stroke="#111" stroke-width="2.3" stroke-linecap="round" stroke-linejoin="round" /></svg>
<svg style="left:22.40px;top:283.90px" width="11.40" height="11.40" viewBox="0 0 16 16" ><path d="M4.2 1.4 h7.6 M3.2 3.6 h9.6" stroke="#a8a8b4" stroke-width="1.4" stroke-linecap="round"/><path d="M2.6 6 h10.8 a0.8 0.8 0 0 1 0.8 0.8 v6.4 a1 1 0 0 1 -1 1 h-10.4 a1 1 0 0 1 -1 -1 v-6.4 a0.8 0.8 0 0 1 0.8 -0.8z" fill="none" stroke="#4a4a68" stroke-width="1.6" stroke-linecap="round" stroke-linejoin="round" /><path d="M4.2 6.4 L8 10 L11.8 6.4" fill="none" stroke="#4a4a68" stroke-width="1.4" stroke-linecap="round" stroke-linejoin="round" /></svg>
<svg style="left:27.60px;top:300.60px" width="12.20" height="12.20" viewBox="0 0 16 16" ><path d="M1.8 4.2 a1.4 1.4 0 0 1 1.4 -1.4 h3 l1.6 1.9 h5 a1.4 1.4 0 0 1 1.4 1.4 v6 a1.4 1.4 0 0 1 -1.4 1.4 h-9.6 a1.4 1.4 0 0 1 -1.4 -1.4z" fill="none" stroke="#4a4a68" stroke-width="1.8" stroke-linecap="round" stroke-linejoin="round" /></svg>
<svg style="left:22.60px;top:316.70px" width="11.60" height="11.60" viewBox="0 0 16 16" ><path d="M1.8 3.8 h12.4 M5.8 3.6 v-1.2 a0.9 0.9 0 0 1 0.9 -0.9 h2.6 a0.9 0.9 0 0 1 0.9 0.9 v1.2" fill="none" stroke="#4a4a68" stroke-width="1.5" stroke-linecap="round" stroke-linejoin="round" /><path d="M3.2 4 v9.4 a1.2 1.2 0 0 0 1.2 1.2 h7.2 a1.2 1.2 0 0 0 1.2 -1.2 v-9.4" fill="none" stroke="#4a4a68" stroke-width="1.6" stroke-linecap="round" stroke-linejoin="round" /><path d="M6.6 6.4 v5.6 M9.4 6.4 v5.6" fill="none" stroke="#4a4a68" stroke-width="1.3" stroke-linecap="round" stroke-linejoin="round" /></svg>
<svg style="left:4.00px;top:335.00px" width="9.40" height="9.40" viewBox="0 0 16 16" ><path d="M2.5 5 L8 10.5 L13.5 5" fill="none" stroke="#111" stroke-width="2.3" stroke-linecap="round" stroke-linejoin="round" /></svg>
<svg style="left:15.60px;top:333.00px" width="12.80" height="12.80" viewBox="0 0 16 16" ><path d="M1.8 4.2 a1.4 1.4 0 0 1 1.4 -1.4 h3 l1.6 1.9 h5 a1.4 1.4 0 0 1 1.4 1.4 v6 a1.4 1.4 0 0 1 -1.4 1.4 h-9.6 a1.4 1.4 0 0 1 -1.4 -1.4z" fill="#a9c9f2" stroke="#2b7de0" stroke-width="1.7" stroke-linecap="round" stroke-linejoin="round" /></svg>
<svg style="left:22.60px;top:349.70px" width="11.60" height="11.60" viewBox="0 0 16 16" ><path d="M1.8 3.8 h12.4 M5.8 3.6 v-1.2 a0.9 0.9 0 0 1 0.9 -0.9 h2.6 a0.9 0.9 0 0 1 0.9 0.9 v1.2" fill="none" stroke="#4a4a68" stroke-width="1.5" stroke-linecap="round" stroke-linejoin="round" /><path d="M3.2 4 v9.4 a1.2 1.2 0 0 0 1.2 1.2 h7.2 a1.2 1.2 0 0 0 1.2 -1.2 v-9.4" fill="none" stroke="#4a4a68" stroke-width="1.6" stroke-linecap="round" stroke-linejoin="round" /><path d="M6.6 6.4 v5.6 M9.4 6.4 v5.6" fill="none" stroke="#4a4a68" stroke-width="1.3" stroke-linecap="round" stroke-linejoin="round" /></svg>
<svg style="left:21.80px;top:366.40px" width="12.20" height="12.20" viewBox="0 0 16 16" ><path d="M3 2.2 h10 a1.2 1.2 0 0 1 1.2 1.2 v9.2 a1.2 1.2 0 0 1 -1.2 1.2 h-10 a1.2 1.2 0 0 1 -1.2 -1.2 v-9.2 a1.2 1.2 0 0 1 1.2 -1.2z" fill="none" stroke="#4a4a68" stroke-width="1.6" stroke-linecap="round" stroke-linejoin="round" /><path d="M1.8 8.8 h3.2 c0.4 1.4 1.4 2 3 2 s2.6 -0.6 3 -2 h3.2" fill="none" stroke="#4a4a68" stroke-width="1.4" stroke-linecap="round" stroke-linejoin="round" /><path d="M8 3.6 L11 6.6 H9 V9 H7 V6.6 H5z" fill="#4a4a68"/></svg>
<span class="t" style="left:124.80px;top:3.50px;font-weight:bold;"><span class="r" style="transform:scaleX(0.8459);margin-right:-3.86px">.ne.jp</span></span>
<span class="t" style="left:37.90px;top:20.00px;"><span class="r" style="transform:scaleX(0.9538);margin-right:-1.08px">Inbox</span></span>
<span class="t" style="left:37.90px;top:36.50px;"><span class="r" style="transform:scaleX(0.9050);margin-right:-3.50px">Archives</span></span>
<span class="t" style="left:44.00px;top:53.00px;"><span class="r" style="transform:scaleX(0.8902);margin-right:-2.34px">2020</span></span>
<span class="t" style="left:37.90px;top:69.50px;"><span class="r" style="transform:scaleX(0.8481);margin-right:-3.67px">Trash</span></span>
<span class="t" style="left:110.80px;top:86.00px;font-weight:bold;"><span class="r" style="transform:scaleX(0.8858);margin-right:-2.86px">.co.jp</span></span>
<span class="t" style="left:37.90px;top:102.50px;"><span class="r" style="transform:scaleX(0.9538);margin-right:-1.08px">Inbox</span></span>
<span class="t" style="left:37.90px;top:119.00px;"><span class="r" style="transform:scaleX(0.9050);margin-right:-3.50px">Archives</span></span>
<span class="t" style="left:44.00px;top:135.50px;color:#000;"><span class="r" style="transform:scaleX(0.8902);margin-right:-2.34px">2020</span></span>
<span class="t" style="left:37.90px;top:152.00px;"><span class="r" style="transform:scaleX(0.8481);margin-right:-3.67px">Trash</span></span>
<span class="t" style="left:106.50px;top:168.50px;font-weight:bold;"><span class="r" style="transform:scaleX(0.8579);margin-right:-3.56px">.co.jp</span></span>
<span class="t" style="left:37.90px;top:185.00px;"><span class="r" style="transform:scaleX(0.9538);margin-right:-1.08px">Inbox</span></span>
<span class="t" style="left:37.90px;top:201.50px;"><span class="r" style="transform:scaleX(0.9050);margin-right:-3.50px">Archives</span></span>
<span class="t" style="left:44.00px;top:218.00px;"><span class="r" style="transform:scaleX(0.8902);margin-right:-2.34px">2020</span></span>
<span class="t" style="left:37.90px;top:234.50px;"><span class="r" style="transform:scaleX(0.8481);margin-right:-3.67px">Trash</span></span>
<span class="t" style="left:109.00px;top:251.00px;font-weight:bold;"><span class="r" style="transform:scaleX(0.8459);margin-right:-3.86px">.co.jp</span></span>
<span class="t" style="left:37.90px;top:267.50px;"><span class="r" style="transform:scaleX(0.9538);margin-right:-1.08px">Inbox</span></span>
<span class="t" style="left:37.90px;top:284.00px;"><span class="r" style="transform:scaleX(0.9050);margin-right:-3.50px">Archives</span></span>
<span class="t" style="left:44.00px;top:300.50px;"><span class="r" style="transform:scaleX(0.8902);margin-right:-2.34px">2020</span></span>
<span class="t" style="left:37.90px;top:317.00px;"><span class="r" style="transform:scaleX(0.8481);margin-right:-3.67px">Trash</span></span>
<span class="t" style="left:31.70px;top:333.50px;font-weight:bold;"><span class="r j" style="transform:scaleX(0.8526);margin-right:-10.51px">ローカルフォルダー</span></span>
<span class="t" style="left:37.90px;top:350.00px;"><span class="r" style="transform:scaleX(0.8481);margin-right:-3.67px">Trash</span></span>
<span class="t" style="left:37.90px;top:366.50px;"><span class="r" style="transform:scaleX(0.9471);margin-right:-1.64px">Outbox</span></span>
</div>
<div id="splitter"></div>
<div id="qfbar">
<div class="abs" style="left:25.00px;top:4.00px;width:0.80px;height:19.00px;background:#d4d4d4;"></div>
<div class="abs" style="left:187.60px;top:4.80px;width:299.00px;height:18.40px;background:#fff;border:0.9px solid #bdbdbd;box-sizing:border-box;border-radius:2px;"></div>
<svg style="left:6.80px;top:7.80px" width="12.20" height="12.20" viewBox="0 0 16 16" ><path d="M6.4 1.6 L1.6 6.4 L4.2 7.4 L6.4 11.8 L11.8 6.4 L7.4 4.2z M9.2 9.2 L14 14" fill="none" stroke="#111" stroke-width="1.8" stroke-linecap="round" stroke-linejoin="round" /></svg>
<svg style="left:33.20px;top:7.60px" width="12.00" height="12.00" viewBox="0 0 16 16" ><path d="M4 1.8 h8 v12.4 l-4 -3 l-4 3z" fill="none" stroke="#111" stroke-width="1.7" stroke-linecap="round" stroke-linejoin="round" /><path d="M6.5 5 h3" fill="none" stroke="#111" stroke-width="1.3" stroke-linecap="round" stroke-linejoin="round" /></svg>
<svg style="left:56.80px;top:7.40px" width="12.60" height="12.60" viewBox="0 0 16 16" ><path d="M8 1.4 L10 5.8 L14.8 6.4 L11.3 9.7 L12.2 14.4 L8 12 L3.8 14.4 L4.7 9.7 L1.2 6.4 L6 5.8z" fill="none" stroke="#111" stroke-width="1.7" stroke-linecap="round" stroke-linejoin="round" /></svg>
<svg style="left:80.60px;top:7.00px" width="13.20" height="13.20" viewBox="0 0 16 16" ><path d="M4.2 0.8 h8.6 a2 2 0 0 1 2 2 v10.4 a2 2 0 0 1 -2 2 h-8.6 a2 2 0 0 1 -2 -2 v-10.4 a2 2 0 0 1 2 -2z" fill="#111"/><rect x="4.3" y="2.9" width="8.4" height="10.2" rx="0.6" fill="#f4f4f4"/><circle cx="8.5" cy="6.3" r="2.1" fill="#111"/><path d="M4.6 13 c0 -3.2 1.7 -4.4 3.9 -4.4 s3.9 1.2 3.9 4.4z" fill="#111"/><path d="M1 4 h2 M1 8 h2 M1 12 h2" stroke="#111" stroke-width="1.5" stroke-linecap="round"/></svg>
<svg style="left:104.20px;top:7.60px" width="12.20" height="12.20" viewBox="0 0 16 16" ><path d="M1.8 2.8 a1 1 0 0 1 1 -1 h4.4 l7 7 a1 1 0 0 1 0 1.4 l-4 4 a1 1 0 0 1 -1.4 0 l-7 -7z" fill="none" stroke="#111" stroke-width="1.9" stroke-linecap="round" stroke-linejoin="round" /><circle cx="5" cy="5" r="1.1" fill="#111"/></svg>
<svg style="left:128.20px;top:6.80px" width="13.60" height="13.60" viewBox="0 0 16 16" ><path d="M4.6 5 v7 a3.4 3.4 0 0 0 6.8 0 v-7.6 a3.4 3.4 0 0 0 -6.8 0z" fill="none" stroke="#111" stroke-width="1.3" stroke-linecap="round" stroke-linejoin="round" /><path d="M8 5.4 v6.4" fill="none" stroke="#111" stroke-width="1.2" stroke-linecap="round" stroke-linejoin="round" /></svg>
<svg style="left:191.40px;top:9.60px" width="8.60" height="8.60" viewBox="0 0 16 16" ><path d="M14.3 6 a4.3 4.3 0 1 1 -8.6 0 a4.3 4.3 0 1 1 8.6 0z M6.8 9.2 L1.6 14.4" fill="none" stroke="#777" stroke-width="1.6" stroke-linecap="round" stroke-linejoin="round" /></svg>
<span class="t" style="left:204.80px;top:8.20px;color:#757575;"><span class="r" style="transform:scaleX(0.9201);margin-right:-12.74px">Filter these messages &lt;Ctrl+Shift+K&gt;</span></span>
</div>
<div id="threadpane">
<div class="abs" style="left:14.00px;top:1.00px;width:0.80px;height:11.00px;background:#ececec;"></div>
<div class="abs" style="left:28.00px;top:1.00px;width:0.80px;height:11.00px;background:#ececec;"></div>
<div class="abs" style="left:41.20px;top:1.00px;width:0.80px;height:11.00px;background:#ececec;"></div>
<div class="abs" style="left:54.60px;top:1.00px;width:0.80px;height:11.00px;background:#ececec;"></div>
<div class="abs" style="left:68.60px;top:1.00px;width:0.80px;height:11.00px;background:#ececec;"></div>
<div class="abs" style="left:405.00px;top:1.00px;width:0.80px;height:11.00px;background:#ececec;"></div>
<div class="abs" style="left:477.40px;top:1.00px;width:0.80px;height:11.00px;background:#ececec;"></div>
<div class="abs" style="left:0.00px;top:13.00px;width:489.00px;height:0.70px;background:#f3f3f3;"></div>
<svg style="left:3.20px;top:1.00px" width="8.60" height="8.60" viewBox="0 0 16 16" ><path d="M4 1.5 v5 h4 M6.4 6.5 v6 h4" fill="none" stroke="#111" stroke-width="2.2" stroke-linecap="round" stroke-linejoin="round" stroke-linecap="butt"/></svg>
<svg style="left:16.00px;top:1.60px" width="9.20" height="9.20" viewBox="0 0 16 16" ><path d="M8 1.4 L10 5.8 L14.8 6.4 L11.3 9.7 L12.2 14.4 L8 12 L3.8 14.4 L4.7 9.7 L1.2 6.4 L6 5.8z" fill="#111" stroke="#111" stroke-width="1.2" stroke-linecap="round" stroke-linejoin="round" /></svg>
<svg style="left:28.40px;top:0.00px" width="11.40" height="11.40" viewBox="0 0 16 16" ><path d="M4.6 5 v7 a3.4 3.4 0 0 0 6.8 0 v-7.6 a3.4 3.4 0 0 0 -6.8 0z" fill="none" stroke="#222" stroke-width="1.3" stroke-linecap="round" stroke-linejoin="round" /><path d="M8 5.4 v6.4" fill="none" stroke="#222" stroke-width="1.2" stroke-linecap="round" stroke-linejoin="round" /></svg>
<svg style="left:43.40px;top:2.00px" width="8.80" height="8.80" viewBox="0 0 16 16" ><path d="M6.6 8.4 a2.5 2.5 0 1 1 -5 0 a2.5 2.5 0 1 1 5 0z M14.4 8.4 a2.5 2.5 0 1 1 -5 0 a2.5 2.5 0 1 1 5 0z M6.6 8.2 h2.8" fill="none" stroke="#111" stroke-width="2.2" stroke-linecap="round" stroke-linejoin="round" /></svg>
<svg style="left:56.80px;top:1.20px" width="9.40" height="9.40" viewBox="0 0 16 16" ><path d="M8.6 1.4 c0.2 2 2.2 3 3.2 4.8 c1.6 3 -0.2 7.6 -3.8 7.8 c-3.4 0.2 -5.8 -3 -4.8 -6.2 c0.4 -1.4 1.2 -2.2 2 -3 c0 1.2 0.4 2 1.2 2.6 c0.8 -2 1 -4 2.2 -6z" fill="#111"/><path d="M8.6 9 c1 0.8 1.4 2 0.8 3 c-0.6 0.8 -1.8 0.8 -2.4 0 c-0.4 -0.8 -0.2 -1.6 0.4 -2.2 c0.2 0.4 0.4 0.6 0.7 0.7 c0.1 -0.5 0.2 -1 0.5 -1.5z" fill="#fff"/></svg>
<svg style="left:465.00px;top:2.00px" width="8.40" height="8.40" viewBox="0 0 16 16" ><path d="M3 10.5 L8 5.5 L13 10.5" fill="none" stroke="#111" stroke-width="2.2" stroke-linecap="round" stroke-linejoin="round" /></svg>
<svg style="left:478.80px;top:1.60px" width="8.40" height="8.40" viewBox="0 0 16 16" ><path d="M2 2.4 h11 v8 h-11z M2 5 h11 M5.6 2.4 v8 M9.4 2.4 v8" fill="none" stroke="#333" stroke-width="1.2" stroke-linecap="round" stroke-linejoin="round" /><path d="M10 11.4 h5 l-2.5 3z" fill="#333"/></svg>
<svg style="left:14.80px;top:16.00px" width="11.40" height="11.40" viewBox="0 0 16 16" ><path d="M8 1.4 L10 5.8 L14.8 6.4 L11.3 9.7 L12.2 14.4 L8 12 L3.8 14.4 L4.7 9.7 L1.2 6.4 L6 5.8z" fill="none" stroke="#c4c4c4" stroke-width="1.5" stroke-linecap="round" stroke-linejoin="round" /></svg>
<div class="abs" style="left:46.4px;top:20.4px;width:3.4px;height:3.4px;border-radius:50%;background:#b5b5b5"></div>
<svg style="left:55.20px;top:15.00px" width="13.20" height="13.20" viewBox="0 0 16 16" ><path d="M7.2 1.2 c0.6 2.6 5 4.4 5 8.6 c0 3 -2.3 5.2 -5.2 5.2 c-2.9 0 -5.2 -2.2 -5.2 -5.1 c0 -1.8 0.8 -3 1.9 -4 c0.2 1 0.6 1.6 1.2 2 c0.3 -2.4 0.7 -4.7 2.3 -6.7z" fill="none" stroke="#c2c2c2" stroke-width="1.4" stroke-linecap="round" stroke-linejoin="round" /><path d="M8.2 8.6 c1.3 1 1.5 2.6 0.4 3.8" fill="none" stroke="#c2c2c2" stroke-width="1.19" stroke-linecap="round" stroke-linejoin="round" /></svg>
<svg style="left:14.80px;top:34.00px" width="11.40" height="11.40" viewBox="0 0 16 16" ><path d="M8 1.4 L10 5.8 L14.8 6.4 L11.3 9.7 L12.2 14.4 L8 12 L3.8 14.4 L4.7 9.7 L1.2 6.4 L6 5.8z" fill="none" stroke="#c4c4c4" stroke-width="1.5" stroke-linecap="round" stroke-linejoin="round" /></svg>
<div class="abs" style="left:46.4px;top:38.4px;width:3.4px;height:3.4px;border-radius:50%;background:#b5b5b5"></div>
<svg style="left:55.20px;top:33.00px" width="13.20" height="13.20" viewBox="0 0 16 16" ><path d="M7.2 1.2 c0.6 2.6 5 4.4 5 8.6 c0 3 -2.3 5.2 -5.2 5.2 c-2.9 0 -5.2 -2.2 -5.2 -5.1 c0 -1.8 0.8 -3 1.9 -4 c0.2 1 0.6 1.6 1.2 2 c0.3 -2.4 0.7 -4.7 2.3 -6.7z" fill="none" stroke="#c2c2c2" stroke-width="1.4" stroke-linecap="round" stroke-linejoin="round" /><path d="M8.2 8.6 c1.3 1 1.5 2.6 0.4 3.8" fill="none" stroke="#c2c2c2" stroke-width="1.19" stroke-linecap="round" stroke-linejoin="round" /></svg>
<svg style="left:14.80px;top:52.00px" width="11.40" height="11.40" viewBox="0 0 16 16" ><path d="M8 1.4 L10 5.8 L14.8 6.4 L11.3 9.7 L12.2 14.4 L8 12 L3.8 14.4 L4.7 9.7 L1.2 6.4 L6 5.8z" fill="none" stroke="#c4c4c4" stroke-width="1.5" stroke-linecap="round" stroke-linejoin="round" /></svg>
<div class="abs" style="left:46.4px;top:56.4px;width:3.4px;height:3.4px;border-radius:50%;background:#b5b5b5"></div>
<svg style="left:55.20px;top:51.00px" width="13.20" height="13.20" viewBox="0 0 16 16" ><path d="M7.2 1.2 c0.6 2.6 5 4.4 5 8.6 c0 3 -2.3 5.2 -5.2 5.2 c-2.9 0 -5.2 -2.2 -5.2 -5.1 c0 -1.8 0.8 -3 1.9 -4 c0.2 1 0.6 1.6 1.2 2 c0.3 -2.4 0.7 -4.7 2.3 -6.7z" fill="none" stroke="#c2c2c2" stroke-width="1.4" stroke-linecap="round" stroke-linejoin="round" /><path d="M8.2 8.6 c1.3 1 1.5 2.6 0.4 3.8" fill="none" stroke="#c2c2c2" stroke-width="1.19" stroke-linecap="round" stroke-linejoin="round" /></svg>
<svg style="left:14.80px;top:70.00px" width="11.40" height="11.40" viewBox="0 0 16 16" ><path d="M8 1.4 L10 5.8 L14.8 6.4 L11.3 9.7 L12.2 14.4 L8 12 L3.8 14.4 L4.7 9.7 L1.2 6.4 L6 5.8z" fill="none" stroke="#c4c4c4" stroke-width="1.5" stroke-linecap="round" stroke-linejoin="round" /></svg>
<div class="abs" style="left:46.4px;top:74.4px;width:3.4px;height:3.4px;border-radius:50%;background:#b5b5b5"></div>
<svg style="left:55.20px;top:69.00px" width="13.20" height="13.20" viewBox="0 0 16 16" ><path d="M7.2 1.2 c0.6 2.6 5 4.4 5 8.6 c0 3 -2.3 5.2 -5.2 5.2 c-2.9 0 -5.2 -2.2 -5.2 -5.1 c0 -1.8 0.8 -3 1.9 -4 c0.2 1 0.6 1.6 1.2 2 c0.3 -2.4 0.7 -4.7 2.3 -6.7z" fill="none" stroke="#c2c2c2" stroke-width="1.4" stroke-linecap="round" stroke-linejoin="round" /><path d="M8.2 8.6 c1.3 1 1.5 2.6 0.4 3.8" fill="none" stroke="#c2c2c2" stroke-width="1.19" stroke-linecap="round" stroke-linejoin="round" /></svg>
<svg style="left:14.80px;top:88.00px" width="11.40" height="11.40" viewBox="0 0 16 16" ><path d="M8 1.4 L10 5.8 L14.8 6.4 L11.3 9.7 L12.2 14.4 L8 12 L3.8 14.4 L4.7 9.7 L1.2 6.4 L6 5.8z" fill="none" stroke="#c4c4c4" stroke-width="1.5" stroke-linecap="round" stroke-linejoin="round" /></svg>
<div class="abs" style="left:46.4px;top:92.4px;width:3.4px;height:3.4px;border-radius:50%;background:#b5b5b5"></div>
<svg style="left:55.20px;top:87.00px" width="13.20" height="13.20" viewBox="0 0 16 16" ><path d="M7.2 1.2 c0.6 2.6 5 4.4 5 8.6 c0 3 -2.3 5.2 -5.2 5.2 c-2.9 0 -5.2 -2.2 -5.2 -5.1 c0 -1.8 0.8 -3 1.9 -4 c0.2 1 0.6 1.6 1.2 2 c0.3 -2.4 0.7 -4.7 2.3 -6.7z" fill="none" stroke="#c2c2c2" stroke-width="1.4" stroke-linecap="round" stroke-linejoin="round" /><path d="M8.2 8.6 c1.3 1 1.5 2.6 0.4 3.8" fill="none" stroke="#c2c2c2" stroke-width="1.19" stroke-linecap="round" stroke-linejoin="round" /></svg>
<svg style="left:14.80px;top:106.00px" width="11.40" height="11.40" viewBox="0 0 16 16" ><path d="M8 1.4 L10 5.8 L14.8 6.4 L11.3 9.7 L12.2 14.4 L8 12 L3.8 14.4 L4.7 9.7 L1.2 6.4 L6 5.8z" fill="none" stroke="#c4c4c4" stroke-width="1.5" stroke-linecap="round" stroke-linejoin="round" /></svg>
<div class="abs" style="left:46.4px;top:110.4px;width:3.4px;height:3.4px;border-radius:50%;background:#b5b5b5"></div>
<svg style="left:55.20px;top:105.00px" width="13.20" height="13.20" viewBox="0 0 16 16" ><path d="M7.2 1.2 c0.6 2.6 5 4.4 5 8.6 c0 3 -2.3 5.2 -5.2 5.2 c-2.9 0 -5.2 -2.2 -5.2 -5.1 c0 -1.8 0.8 -3 1.9 -4 c0.2 1 0.6 1.6 1.2 2 c0.3 -2.4 0.7 -4.7 2.3 -6.7z" fill="#ffae26" stroke="#ee7d10" stroke-width="1.2" stroke-linecap="round" stroke-linejoin="round" /><path d="M8.4 8 c1.6 1.4 2.2 3 1.4 4.6 c-0.6 1 -2.6 1.2 -3.4 0 c-0.8 -1.2 0 -2.4 0.6 -3 c0.2 0.8 0.4 1 0.8 1.2 c0.2 -1 0.2 -1.8 0.6 -2.8z" fill="#ffd24a"/></svg>
<svg style="left:14.80px;top:124.00px" width="11.40" height="11.40" viewBox="0 0 16 16" ><path d="M8 1.4 L10 5.8 L14.8 6.4 L11.3 9.7 L12.2 14.4 L8 12 L3.8 14.4 L4.7 9.7 L1.2 6.4 L6 5.8z" fill="none" stroke="#c4c4c4" stroke-width="1.5" stroke-linecap="round" stroke-linejoin="round" /></svg>
<div class="abs" style="left:46.4px;top:128.4px;width:3.4px;height:3.4px;border-radius:50%;background:#b5b5b5"></div>
<svg style="left:55.20px;top:123.00px" width="13.20" height="13.20" viewBox="0 0 16 16" ><path d="M7.2 1.2 c0.6 2.6 5 4.4 5 8.6 c0 3 -2.3 5.2 -5.2 5.2 c-2.9 0 -5.2 -2.2 -5.2 -5.1 c0 -1.8 0.8 -3 1.9 -4 c0.2 1 0.6 1.6 1.2 2 c0.3 -2.4 0.7 -4.7 2.3 -6.7z" fill="none" stroke="#c2c2c2" stroke-width="1.4" stroke-linecap="round" stroke-linejoin="round" /><path d="M8.2 8.6 c1.3 1 1.5 2.6 0.4 3.8" fill="none" stroke="#c2c2c2" stroke-width="1.19" stroke-linecap="round" stroke-linejoin="round" /></svg>
<svg style="left:14.80px;top:142.00px" width="11.40" height="11.40" viewBox="0 0 16 16" ><path d="M8 1.4 L10 5.8 L14.8 6.4 L11.3 9.7 L12.2 14.4 L8 12 L3.8 14.4 L4.7 9.7 L1.2 6.4 L6 5.8z" fill="none" stroke="#c4c4c4" stroke-width="1.5" stroke-linecap="round" stroke-linejoin="round" /></svg>
<div class="abs" style="left:46.4px;top:146.4px;width:3.4px;height:3.4px;border-radius:50%;background:#b5b5b5"></div>
<svg style="left:55.20px;top:141.00px" width="13.20" height="13.20" viewBox="0 0 16 16" ><path d="M7.2 1.2 c0.6 2.6 5 4.4 5 8.6 c0 3 -2.3 5.2 -5.2 5.2 c-2.9 0 -5.2 -2.2 -5.2 -5.1 c0 -1.8 0.8 -3 1.9 -4 c0.2 1 0.6 1.6 1.2 2 c0.3 -2.4 0.7 -4.7 2.3 -6.7z" fill="none" stroke="#c2c2c2" stroke-width="1.4" stroke-linecap="round" stroke-linejoin="round" /><path d="M8.2 8.6 c1.3 1 1.5 2.6 0.4 3.8" fill="none" stroke="#c2c2c2" stroke-width="1.19" stroke-linecap="round" stroke-linejoin="round" /></svg>
<span class="t" style="left:83.80px;top:0.10px;"><span class="r" style="transform:scaleX(0.8937);margin-right:-3.40px">Subject</span></span>
<span class="t" style="left:263.00px;top:0.10px;"><span class="r" style="transform:scaleX(0.9287);margin-right:-4.87px">Correspondents</span></span>
<span class="t" style="left:409.50px;top:0.10px;"><span class="r" style="transform:scaleX(0.8635);margin-right:-2.77px">Date</span></span>
<span class="t" style="left:82.60px;top:15.80px;"><span class="r" style="transform:scaleX(0.8990);margin-right:-4.90px">【ZIGSOW】</span><span class="r j" style="transform:scaleX(0.9559);margin-right:-4.94px">小さくて安い　でも、ハイレゾ音</span><span class="r" style="transform:scaleX(0.7875);margin-right:-1.70px">...</span></span>
<span class="t" style="left:263.00px;top:15.80px;"><span class="r" style="transform:scaleX(0.8790);margin-right:-4.71px">ZIGSOW</span><span class="r j" style="transform:scaleX(1.0460);margin-right:1.93px">運営事務局</span></span>
<span class="t" style="left:408.30px;top:15.80px;"><span class="r" style="transform:scaleX(0.9395);margin-right:-4.31px">2020/12/01 11:...</span></span>
<span class="t" style="left:82.60px;top:33.80px;"><span class="r" style="transform:scaleX(0.8990);margin-right:-4.90px">【ZIGSOW】</span><span class="r j" style="transform:scaleX(0.9987);margin-right:-0.12px">日記コメント書き込み通知</span></span>
<span class="t" style="left:263.00px;top:33.80px;"><span class="r" style="transform:scaleX(0.8790);margin-right:-4.71px">ZIGSOW</span><span class="r j" style="transform:scaleX(1.0460);margin-right:1.93px">運営事務局</span></span>
<span class="t" style="left:408.30px;top:33.80px;"><span class="r" style="transform:scaleX(0.9304);margin-right:-5.02px">2020/12/02 14:...</span></span>
<span class="t" style="left:82.60px;top:51.80px;"><span class="r" style="transform:scaleX(0.8990);margin-right:-4.90px">【ZIGSOW】</span><span class="r j" style="transform:scaleX(0.9987);margin-right:-0.12px">日記コメント書き込み通知</span></span>
<span class="t" style="left:263.00px;top:51.80px;"><span class="r" style="transform:scaleX(0.8790);margin-right:-4.71px">ZIGSOW</span><span class="r j" style="transform:scaleX(1.0460);margin-right:1.93px">運営事務局</span></span>
<span class="t" style="left:408.30px;top:51.80px;"><span class="r" style="transform:scaleX(0.9304);margin-right:-5.02px">2020/12/02 14:...</span></span>
<span class="t" style="left:82.60px;top:69.80px;"><span class="r" style="transform:scaleX(0.8990);margin-right:-4.90px">【ZIGSOW】</span><span class="r j" style="transform:scaleX(0.9436);margin-right:-6.11px">モチモノコメント書き込み通知</span></span>
<span class="t" style="left:263.00px;top:69.80px;"><span class="r" style="transform:scaleX(0.8790);margin-right:-4.71px">ZIGSOW</span><span class="r j" style="transform:scaleX(1.0460);margin-right:1.93px">運営事務局</span></span>
<span class="t" style="left:408.30px;top:69.80px;"><span class="r" style="transform:scaleX(0.9304);margin-right:-5.02px">2020/12/02 17:...</span></span>
<span class="t" style="left:82.60px;top:87.80px;"><span class="r" style="transform:scaleX(0.8990);margin-right:-4.90px">【ZIGSOW】</span><span class="r j" style="transform:scaleX(0.9471);margin-right:-2.48px">アクセス数が</span><span class="r" style="transform:scaleX(0.9074);margin-right:-3.46px">2000000</span><span class="r j" style="transform:scaleX(0.9220);margin-right:-2.46px">を達成し</span><span class="r" style="transform:scaleX(0.8750);margin-right:-1.00px">...</span></span>
<span class="t" style="left:263.00px;top:87.80px;"><span class="r" style="transform:scaleX(0.8790);margin-right:-4.71px">ZIGSOW</span><span class="r j" style="transform:scaleX(1.0460);margin-right:1.93px">運営事務局</span></span>
<span class="t" style="left:408.30px;top:87.80px;"><span class="r" style="transform:scaleX(0.9328);margin-right:-4.66px">2020/12/03 8:46</span></span>
<span class="t" style="left:83.80px;top:105.80px;"><span class="r" style="transform:scaleX(0.8968);margin-right:-7.01px">[Yahoo! JAPAN]</span><span class="r j" style="transform:scaleX(0.8840);margin-right:-7.00px">ログインアラート</span><span class="r" style="transform:scaleX(0.9071);margin-right:-3.72px"> 2020/12/</span><span class="r" style="transform:scaleX(0.8000);margin-right:-1.60px">...</span></span>
<span class="t" style="left:263.00px;top:105.80px;"><span class="r" style="transform:scaleX(0.9206);margin-right:-8.78px">Yahoo! JAPAN Login Alert</span></span>
<span class="t" style="left:408.30px;top:105.80px;"><span class="r" style="transform:scaleX(0.9328);margin-right:-4.66px">2020/12/04 6:38</span></span>
<span class="t" style="left:82.60px;top:123.80px;"><span class="r j" style="transform:scaleX(0.9634);margin-right:-5.76px">【クリスマスプレゼントに！新登場「すごいカラ</span><span class="r" style="transform:scaleX(0.8125);margin-right:-1.50px">...</span></span>
<span class="t" style="left:263.00px;top:123.80px;"><span class="r j" style="transform:scaleX(0.9925);margin-right:-0.95px">セブンプレミアム向上委員会事務局</span></span>
<span class="t" style="left:408.30px;top:123.80px;"><span class="r" style="transform:scaleX(0.9304);margin-right:-5.02px">2020/12/04 18:...</span></span>
<span class="t" style="left:82.60px;top:141.80px;"><span class="r" style="transform:scaleX(0.8990);margin-right:-4.90px">【ZIGSOW】</span><span class="r j" style="transform:scaleX(0.9436);margin-right:-6.11px">モチモノコメント書き込み通知</span></span>
<span class="t" style="left:263.00px;top:141.80px;"><span class="r" style="transform:scaleX(0.8790);margin-right:-4.71px">ZIGSOW</span><span class="r j" style="transform:scaleX(1.0460);margin-right:1.93px">運営事務局</span></span>
<span class="t" style="left:408.30px;top:141.80px;"><span class="r" style="transform:scaleX(0.8615);margin-right:-2.59px">0:39</span></span>
</div>
<div id="msgpane">
</div>
<div id="statusbar">
<svg style="left:0;top:0" width="642" height="18" viewBox="0 493 642 18">
<path d="M401 493.4 L416.5 493.4 C410 497 404.5 503 402.5 510.2 L380.6 510.2 C385 503 392 497.5 401 493.4Z" fill="#a99a52"/>
<path d="M404 494 C396 499 389 505 384 510 M409 494 C401 499 395 505 391 510 M413 494 C406 499 400 505 397.5 510" stroke="#7d7136" stroke-width="0.8" fill="none"/>
<path d="M634 493.4 C633 499 632.6 505 632.6 510.2 L642 510.2 L642 493.4Z" fill="#a38f62"/>
<path d="M636.5 494 C636 500 635.8 505 635.8 510 M639 494 L638.8 510" stroke="#6d5d3c" stroke-width="0.8" fill="none"/>
</svg>
<div class="abs" style="left:21.40px;top:1.50px;width:0.80px;height:15.00px;background:#c9c49a;"></div>
<div class="abs" style="left:541.40px;top:3.00px;width:0.80px;height:12.40px;background:#bdb88e;"></div>
<div class="abs" style="left:595.00px;top:3.00px;width:0.80px;height:12.40px;background:#bdb88e;"></div>
<svg style="left:4.60px;top:3.00px" width="13.00" height="13.00" viewBox="0 0 16 16" ><circle cx="8" cy="8" r="1.6" fill="#111"/><path d="M5.4 5 a4.4 4.4 0 0 0 0 6 M10.6 5 a4.4 4.4 0 0 1 0 6" fill="none" stroke="#111" stroke-width="1.5" stroke-linecap="round" stroke-linejoin="round" /><path d="M3 2.6 a8 8 0 0 0 0 10.8 M13 2.6 a8 8 0 0 1 0 10.8" fill="none" stroke="#111" stroke-width="1.7" stroke-linecap="round" stroke-linejoin="round" /></svg>
<span class="t" style="left:554.00px;top:3.30px;"><span class="r" style="transform:scaleX(0.8899);margin-right:-4.64px">Unread: 0</span></span>
<span class="t" style="left:607.00px;top:3.30px;"><span class="r" style="transform:scaleX(0.8889);margin-right:-3.44px">Total: 8</span></span>
</div>
<div id="frame"><i class="l"></i><i class="r"></i><i class="tp"></i><i class="b"></i></div>
</div>
</body>
</html>
